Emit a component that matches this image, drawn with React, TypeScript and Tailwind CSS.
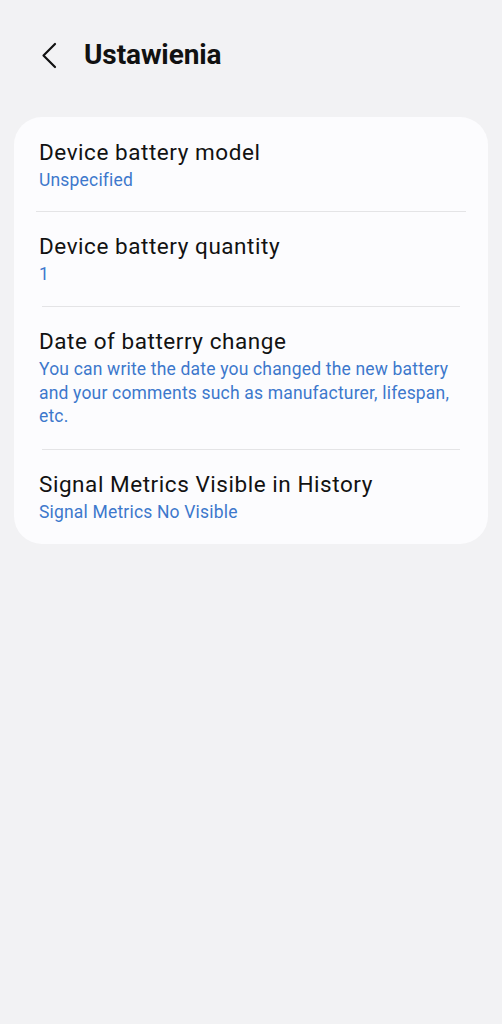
const rows = [
    { title: "Device battery model", sub: "Unspecified" },
    { title: "Device battery quantity", sub: "1" },
    {
        title: "Date of batterry change",
        sub: "You can write the date you changed the new battery and your comments such as manufacturer, lifespan, etc.",
    },
    { title: "Signal Metrics Visible in History", sub: "Signal Metrics No Visible" },
];

export default function App() {
    return (
        <div className="min-h-[1024px] w-full bg-[#f2f2f4] px-[14px] font-['Roboto','Liberation_Sans',sans-serif]">
            {/* Header */}
            <div className="flex h-[56px] items-center pt-[27px] box-content">
                <button className="ml-[25px] flex h-[30px] w-[20px] items-center justify-center text-[#111]">
                    <svg width="16" height="27" viewBox="0 0 16 27" fill="none" stroke="currentColor" strokeWidth="2.2" strokeLinecap="round" strokeLinejoin="round">
                        <path d="M14 2 L2.5 13.5 L14 25" />
                    </svg>
                </button>
                <h1 className="ml-[25px] text-[28px] font-bold leading-none tracking-[-0.1px] text-[#111]">Ustawienia</h1>
            </div>

            {/* Settings card */}
            <div className="mt-[34px] rounded-[28px] bg-[#fcfcfe]">
                {rows.map((row, i) => (
                    <div key={row.title}>
                        {i > 0 && (
                            <div className={i === 1 ? "mx-[22px] h-px bg-[#e4e4e6]" : "mx-[28px] h-px bg-[#e4e4e6]"} />
                        )}
                        <div className={i === 0 ? "pl-[25px] pr-[24px] pt-[21px] pb-[18px]" : "pl-[25px] pr-[24px] pt-5 pb-5"}>
                            <div className="text-[22.5px] leading-[28px] tracking-[0.55px] text-[#121212]">{row.title}</div>
                            <div className="mt-[3px] text-[17.5px] leading-[23.5px] tracking-[0.18px] text-[#3d78cc]">{row.sub}</div>
                        </div>
                    </div>
                ))}
            </div>
        </div>
    );
}
